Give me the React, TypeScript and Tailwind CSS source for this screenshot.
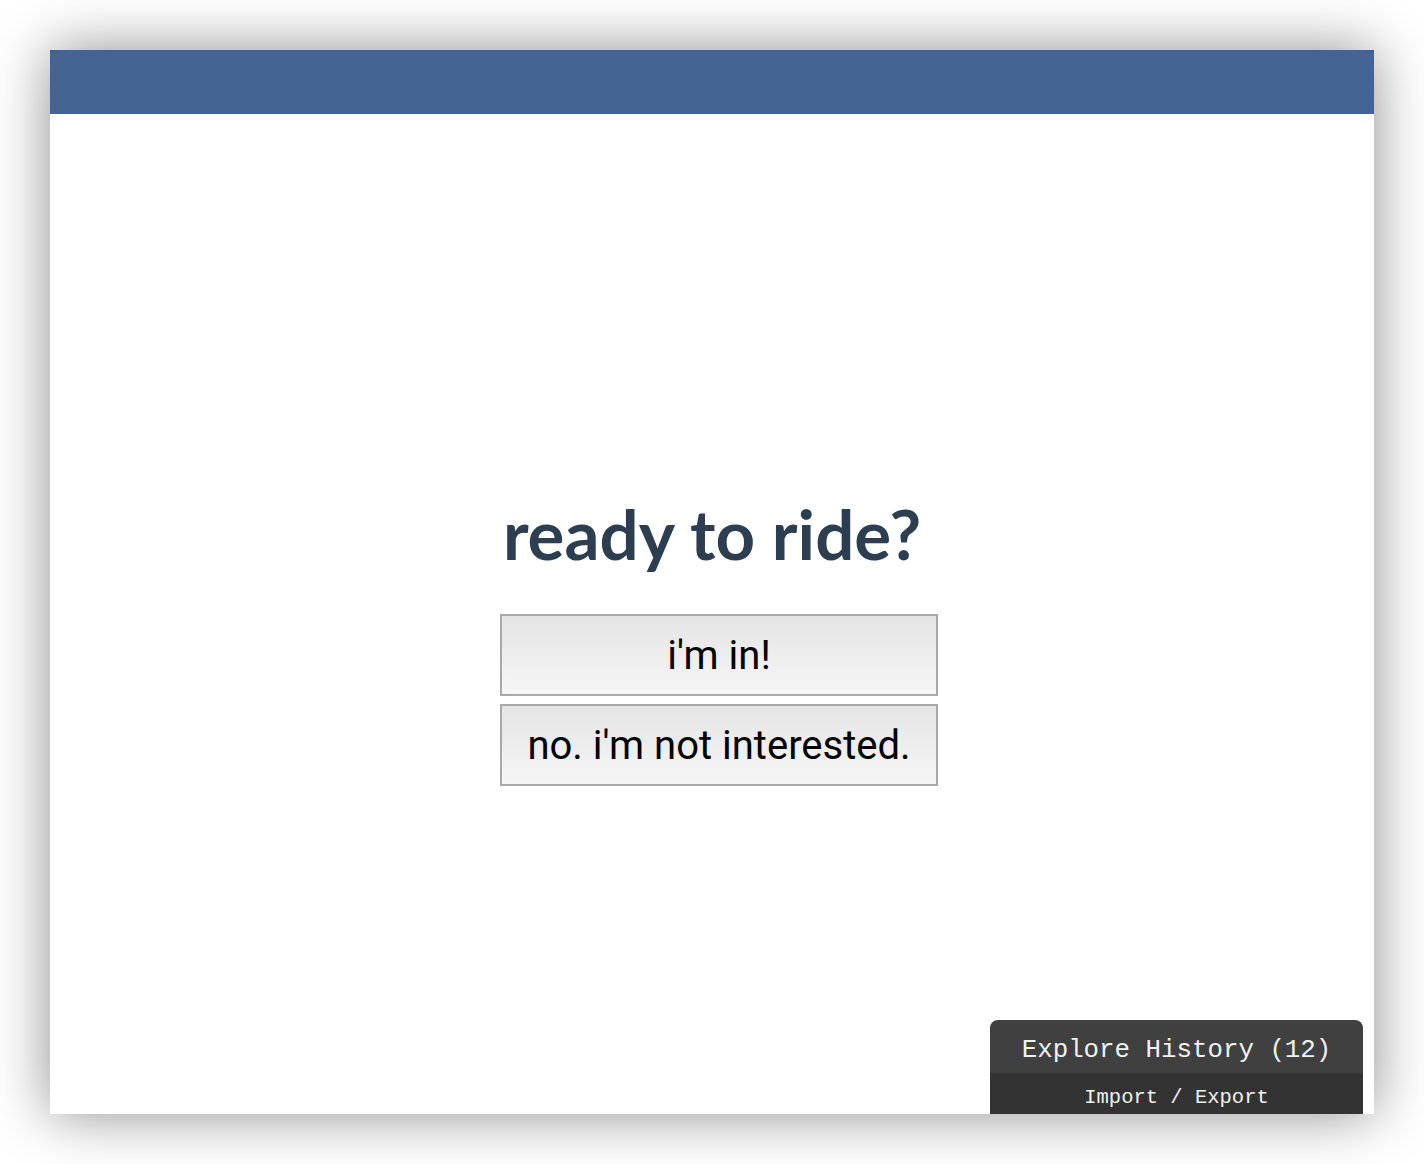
import React from 'react';

// Simple "ready to ride?" prompt inside a framed window
const App: React.FC = () => {
  return (
    <div className="h-[1164px] w-full bg-white p-[50px]">
      <div className="relative flex h-[1064px] flex-col overflow-hidden bg-white shadow-[0_0_55px_rgba(0,0,0,0.45)]">
        <header className="h-[64px] shrink-0 bg-[#436392]"></header>

        <main className="flex flex-1 flex-col items-center pt-[385px]">
          <h1 className="font-['Lato',sans-serif] text-[69px] font-bold leading-[69px] text-[#2c3e50]">
            ready to ride?
          </h1>

          <div className="ml-[14px] mt-[46px] flex flex-col gap-[8px]">
            <button className="h-[82px] w-[438px] border-2 border-[#a9a9a9] bg-gradient-to-b from-[#e5e5e5] to-[#f6f6f6] pt-[2px] font-['Roboto',sans-serif] text-[40px] text-black">
              i'm in!
            </button>
            <button className="h-[82px] w-[438px] border-2 border-[#a9a9a9] bg-gradient-to-b from-[#e5e5e5] to-[#f6f6f6] pt-[2px] font-['Roboto',sans-serif] text-[40px] text-black">
              no. i'm not interested.
            </button>
          </div>
        </main>

        {/* history widget, clipped by the window's bottom edge */}
        <div className="absolute bottom-[-20px] right-[11px] w-[373px] overflow-hidden rounded-t-[8px] font-['Liberation_Mono',monospace] text-[#f2f2f2]">
          <div className="flex h-[53px] items-center justify-center bg-[#404040] pt-[10px] text-[25.8px]">
            Explore History (12)
          </div>
          <div className="flex h-[61px] justify-center bg-[#333333] pt-[10px] text-[20.5px]">
            Import / Export
          </div>
        </div>
      </div>
    </div>
  );
};

export default App;
